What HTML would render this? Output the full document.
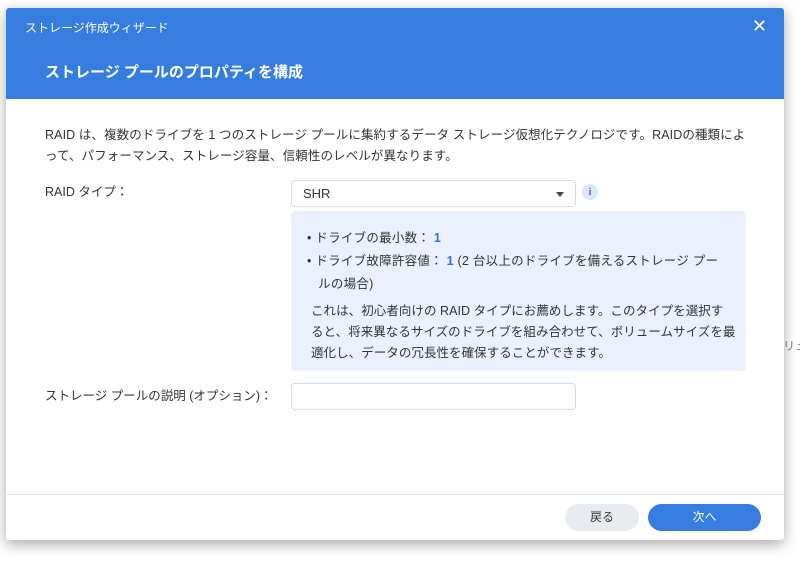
<!DOCTYPE html>
<html><head><meta charset="utf-8"><style>
body{margin:0;width:800px;height:566px;background:#fff;position:relative;overflow:hidden;font-family:"Liberation Sans","Noto Sans CJK JP",sans-serif;color:#333;}
.bgt{position:absolute;left:783px;top:337px;font-size:12px;color:#888;white-space:nowrap;}
.dlg{position:absolute;left:6px;top:8px;width:778px;height:532px;background:#fff;border-radius:3px;box-shadow:0 4px 14px rgba(0,0,0,.35);overflow:hidden;}
.hd{position:absolute;left:0;top:0;width:100%;height:91px;background:#367de0;color:#fff;}
.t1{position:absolute;left:19px;top:11px;font-size:12px;}
.t2{position:absolute;left:39px;top:53px;font-size:15px;font-weight:bold;}
.x{position:absolute;right:19px;top:12px;width:11px;height:11px;}
.p{position:absolute;font-size:12.5px;line-height:21px;white-space:nowrap;}
.sel{position:absolute;left:285px;top:172px;width:283px;height:25px;border:1px solid #d5dbe3;border-radius:4px;font-size:13px;}
.info{position:absolute;left:576px;top:176px;width:16px;height:16px;border-radius:50%;background:#dce8fa;color:#367de0;font-size:11px;font-weight:bold;text-align:center;line-height:16px;font-family:"Liberation Serif",serif;}
.box{position:absolute;left:285px;top:203px;width:455px;height:160px;background:#eaf1fc;border-radius:4px;}
.b{color:#2d73d9;font-weight:bold;}
.ft{position:absolute;left:0;top:486px;width:100%;border-top:1px solid #e3e8ef;}
.btn{position:absolute;top:496px;height:27px;border-radius:14px;font-size:12px;text-align:center;line-height:27px;}
</style></head><body>
<div class="bgt">リュ</div>
<div class="dlg">
<div class="hd"><div class="t1">ストレージ作成ウィザード</div><div class="t2">ストレージ プールのプロパティを構成</div>
<svg class="x" viewBox="0 0 12 12"><path d="M1.5 1.5L10.5 10.5M10.5 1.5L1.5 10.5" stroke="#fff" stroke-width="2" stroke-linecap="round"/></svg></div>
<div class="p" style="left:39px;top:117px;letter-spacing:0.1px;">RAID は、複数のドライブを 1 つのストレージ プールに集約するデータ ストレージ仮想化テクノロジです。RAIDの種類によ<br>って、パフォーマンス、ストレージ容量、信頼性のレベルが異なります。</div>
<div class="p" style="left:39px;top:174px;">RAID タイプ：</div>
<div class="sel"><span style="position:absolute;left:11px;top:5px;">SHR</span>
<svg style="position:absolute;right:11px;top:11px" width="8" height="5" viewBox="0 0 8 5"><path d="M0 0H8L4 5Z" fill="#444"/></svg></div>
<div class="info">i</div>
<div class="box">
<div class="p" style="left:16px;top:16px;line-height:23px;letter-spacing:0.25px;">• ドライブの最小数： <span class="b">1</span><br>• ドライブ故障許容値： <span class="b">1</span> (2 台以上のドライブを備えるストレージ プー<br>&nbsp;&nbsp;&nbsp;ルの場合)</div>
<div class="p" style="left:20px;top:90px;line-height:21px;letter-spacing:0.05px;">これは、初心者向けの RAID タイプにお薦めします。このタイプを選択す<br>ると、将来異なるサイズのドライブを組み合わせて、ボリュームサイズを最<br>適化し、データの冗長性を確保することができます。</div>
</div>
<div class="p" style="left:39px;top:378px;">ストレージ プールの説明 (オプション)：</div>
<div class="sel" style="top:375px;"></div>
<div class="ft"></div>
<div class="btn" style="left:559px;width:74px;background:#e8ecf1;">戻る</div>
<div class="btn" style="left:642px;width:113px;background:#367de0;color:#fff;">次へ</div>
</div>
</body></html>
